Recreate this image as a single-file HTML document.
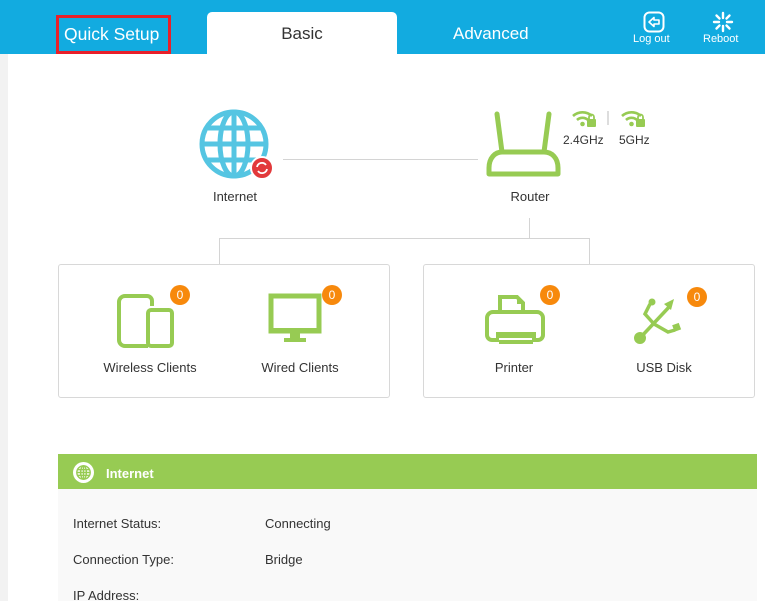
<!DOCTYPE html>
<html><head><meta charset="utf-8"><style>
*{margin:0;padding:0;box-sizing:border-box}
body{width:765px;height:601px;overflow:hidden;background:#fff;font-family:"Liberation Sans",sans-serif;position:relative;color:#333}
.a{position:absolute}
.hdr{left:0;top:0;width:765px;height:54px;background:#12abe0}
.t{font-size:17px;color:#fff}
.lbl{font-size:13px;color:#333;text-align:center}
.box{border:1px solid #d8d8d8;border-radius:3px;background:#fff}
.badge{width:20px;height:20px;border-radius:10px;background:#f7890c;color:#fff;font-size:12px;text-align:center;line-height:20px}
.ln{background:#d4d4d4}
.row{font-size:13px;color:#333}
</style></head><body>
<div class="a" style="left:0;top:54px;width:8px;height:547px;background:#f2f2f2"></div>
<div class="a hdr"></div>
<div class="a" style="left:56px;top:15px;width:115px;height:39px;border:3px solid #e8202a"></div>
<div class="a t" style="left:64px;top:24px;font-size:17.5px">Quick Setup</div>
<div class="a" style="left:207px;top:12px;width:190px;height:42px;background:#fff;border-radius:5px 5px 0 0"></div>
<div class="a t" style="left:207px;top:24px;width:190px;text-align:center;color:#333">Basic</div>
<div class="a t" style="left:453px;top:24px">Advanced</div>
<svg class="a" style="left:643px;top:11px" width="22" height="22" viewBox="0 0 22 22"><rect x="1.5" y="1.5" width="19" height="19" rx="5" fill="none" stroke="#fff" stroke-width="2"/><path d="M6 11 L11 6.5 V9 H16 V13 H11 V15.5 Z" fill="none" stroke="#fff" stroke-width="1.6" stroke-linejoin="round"/></svg>
<div class="a" style="left:633px;top:33px;font-size:11px;color:#fff">Log out</div>
<svg class="a" style="left:712px;top:11px" width="22" height="22" viewBox="0 0 22 22" stroke="#fff" stroke-width="2.4" stroke-linecap="round"><path d="M11 2v5M11 15v5M2 11h5M15 11h5M4.5 4.5l3 3M14.5 14.5l3 3M4.5 17.5l3-3M14.5 7.5l3-3"/></svg>
<div class="a" style="left:703px;top:33px;font-size:11px;color:#fff">Reboot</div>

<svg class="a" style="left:198px;top:109px" width="76" height="70" viewBox="0 0 76 70"><g fill="none" stroke="#55c5e2" stroke-width="5"><circle cx="36" cy="35" r="32"/><ellipse cx="36" cy="35" rx="14" ry="32"/><path d="M36 3v64M5 35h62M10 19h52M10 51h52"/></g><circle cx="64" cy="59" r="11" fill="#e2393b" stroke="#fff" stroke-width="2"/><path d="M59 58a5 5 0 0 1 9-2M69 60a5 5 0 0 1-9 2" stroke="#fff" stroke-width="1.8" fill="none"/></svg>
<div class="a lbl" style="left:200px;top:189px;width:70px">Internet</div>
<div class="a ln" style="left:283px;top:159px;width:195px;height:1px"></div>
<svg class="a" style="left:485px;top:110px" width="90" height="72" viewBox="0 0 90 72"><g fill="none" stroke="#97cb53" stroke-width="5" stroke-linecap="round" stroke-linejoin="round"><path d="M12 4l5 38M64 4l-5 38"/><path d="M17 42h42c8 0 14 6 14 16v6H4v-6c0-10 6-16 13-16z"/></g></svg>
<div class="a lbl" style="left:500px;top:189px;width:60px">Router</div>
<svg class="a" style="left:571px;top:109px" width="80" height="19" viewBox="0 0 80 19"><g fill="none" stroke="#97cb53" stroke-width="2.6"><path d="M2 7a14 14 0 0 1 19 0M6 11a8 8 0 0 1 11 0"/><path d="M51 7a14 14 0 0 1 19 0M55 11a8 8 0 0 1 11 0"/></g><g fill="#97cb53"><circle cx="11.5" cy="15" r="2.3"/><circle cx="60.5" cy="15" r="2.3"/><rect x="16" y="10" width="9" height="8" rx="1"/><rect x="65" y="10" width="9" height="8" rx="1"/></g><g fill="none" stroke="#97cb53" stroke-width="1.8"><path d="M18 10V8a2.5 2.5 0 0 1 5 0v2M67 10V8a2.5 2.5 0 0 1 5 0v2"/></g><path d="M37 2v14" stroke="#bbb"/></svg>
<div class="a" style="left:563px;top:133px;font-size:12px;color:#333">2.4GHz</div>
<div class="a" style="left:619px;top:133px;font-size:12px;color:#333">5GHz</div>
<div class="a ln" style="left:529px;top:218px;width:1px;height:20px"></div>
<div class="a ln" style="left:219px;top:238px;width:371px;height:1px"></div>
<div class="a ln" style="left:219px;top:238px;width:1px;height:26px"></div>
<div class="a ln" style="left:589px;top:238px;width:1px;height:26px"></div>

<div class="a box" style="left:58px;top:264px;width:332px;height:134px"></div>
<div class="a box" style="left:423px;top:264px;width:332px;height:134px"></div>
<svg class="a" style="left:116px;top:293px" width="62" height="56" viewBox="0 0 62 56"><g fill="none" stroke="#97cb53" stroke-width="4"><path d="M32 53H9a6 6 0 0 1-6-6V9a6 6 0 0 1 6-6h22a5 5 0 0 1 5 5v5"/><rect x="32" y="17" width="24" height="36" rx="3"/></g></svg>
<div class="a badge" style="left:170px;top:285px">0</div>
<div class="a lbl" style="left:90px;top:360px;width:120px">Wireless Clients</div>
<svg class="a" style="left:268px;top:293px" width="56" height="50" viewBox="0 0 56 50"><rect x="3" y="3" width="48" height="35" fill="none" stroke="#97cb53" stroke-width="5"/><rect x="2" y="35" width="50" height="5" fill="#97cb53"/><path d="M22 40h10v5h6v4H16v-4h6z" fill="#97cb53"/></svg>
<div class="a badge" style="left:322px;top:285px">0</div>
<div class="a lbl" style="left:240px;top:360px;width:120px">Wired Clients</div>
<svg class="a" style="left:484px;top:294px" width="64" height="56" viewBox="0 0 64 56"><g fill="none" stroke="#97cb53" stroke-width="4"><path d="M16 18V3h17l6 6v9"/><path d="M15 46H8a5 5 0 0 1-5-5V24a6 6 0 0 1 6-6h44a6 6 0 0 1 6 6v17a5 5 0 0 1-5 5h-6"/></g><rect x="12" y="38" width="40" height="6" fill="#97cb53"/><rect x="15" y="46" width="34" height="4" fill="#97cb53"/><path d="M33 3v7h6" fill="#97cb53"/></svg>
<div class="a badge" style="left:540px;top:285px">0</div>
<div class="a lbl" style="left:474px;top:360px;width:80px">Printer</div>
<svg class="a" style="left:632px;top:296px" width="56" height="50" viewBox="0 0 56 50"><g fill="none" stroke="#97cb53" stroke-width="3.5"><path d="M8 42L38 10"/><path d="M22 28L13 18l5-10"/><path d="M22 28l14 8 7-2"/></g><circle cx="8" cy="42" r="6" fill="#97cb53"/><circle cx="20" cy="6" r="3.5" fill="#97cb53"/><path d="M32 8l10-5-3 11z" fill="#97cb53"/><rect x="41" y="28" width="7" height="7" fill="#97cb53" transform="rotate(-20 44 31)"/></svg>
<div class="a badge" style="left:687px;top:287px">0</div>
<div class="a lbl" style="left:624px;top:360px;width:80px">USB Disk</div>

<div class="a" style="left:58px;top:454px;width:699px;height:35px;background:#97cb53"></div>
<svg class="a" style="left:73px;top:462px" width="21" height="21" viewBox="0 0 22 22"><circle cx="11" cy="11" r="11" fill="#fff"/><g fill="none" stroke="#97cb53" stroke-width="1.5"><circle cx="11" cy="11" r="7"/><ellipse cx="11" cy="11" rx="3" ry="7"/><path d="M11 4v14M4 11h14M5 8h12M5 14h12"/></g></svg>
<div class="a" style="left:106px;top:466px;font-size:13px;font-weight:bold;color:#fff">Internet</div>
<div class="a" style="left:58px;top:489px;width:699px;height:112px;background:#f9f9f9"></div>
<div class="a row" style="left:73px;top:516px">Internet Status:</div>
<div class="a row" style="left:265px;top:516px">Connecting</div>
<div class="a row" style="left:73px;top:552px">Connection Type:</div>
<div class="a row" style="left:265px;top:552px">Bridge</div>
<div class="a row" style="left:73px;top:588px">IP Address:</div>
</body></html>
